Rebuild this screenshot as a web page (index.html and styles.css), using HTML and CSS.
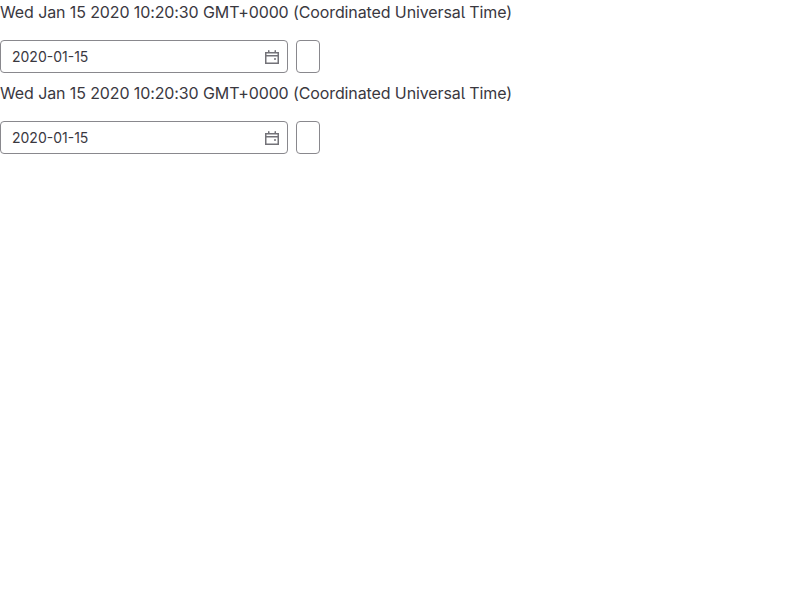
FILE: index.html
```html
<!DOCTYPE html>
<html lang="en">
<head>
<meta charset="utf-8">
<title>Date pickers</title>
<link rel="stylesheet" href="styles.css">
</head>
<body>
<section class="picker">
  <p class="value">Wed Jan 15 2020 10:20:30 GMT+0000 (Coordinated Universal Time)</p>
  <div class="row">
    <div class="field">
      <span class="date">2020-01-15</span>
      <svg class="icon" viewBox="0 0 16 16"><path fill-rule="evenodd" d="M5.500 1.750a.75.75 0 0 0-1.500 0V3H1v12h14V3h-3V1.750a.75.75 0 0 0-1.500 0V3h-5zM2.500 4.500h11V6h-11zm0 3h11v6h-11zM12 10a1 1 0 1 1-2 0 1 1 0 0 1 2 0z"/></svg>
    </div>
    <button class="button" type="button"></button>
  </div>
</section>
<section class="picker">
  <p class="value">Wed Jan 15 2020 10:20:30 GMT+0000 (Coordinated Universal Time)</p>
  <div class="row">
    <div class="field">
      <span class="date">2020-01-15</span>
      <svg class="icon" viewBox="0 0 16 16"><path fill-rule="evenodd" d="M5.500 1.750a.75.75 0 0 0-1.500 0V3H1v12h14V3h-3V1.750a.75.75 0 0 0-1.500 0V3h-5zM2.500 4.500h11V6h-11zm0 3h11v6h-11zM12 10a1 1 0 1 1-2 0 1 1 0 0 1 2 0z"/></svg>
    </div>
    <button class="button" type="button"></button>
  </div>
</section>
</body>
</html>
```
FILE: styles.css
```css
* { box-sizing: border-box; }
body { margin: 0; background: #fff; color: #3a383f; font: 16px/24px Inter, sans-serif; font-feature-settings: "cv05"; }
.picker { height: 81px; }
.value { margin: 0 0 16px; letter-spacing: -0.11px; }
.row { display: flex; gap: 8px; }
.field { display: flex; align-items: center; justify-content: space-between; width: 288px; height: 33px; padding: 0 7px 0 11px; border: 1px solid #89888d; border-radius: 4px; }
.date { font-size: 14px; line-height: 16px; }
.icon { width: 16px; height: 16px; fill: #737278; }
.button { width: 24px; height: 33px; padding: 0; border: 1px solid #89888d; border-radius: 4px; background: #fff; }
```
